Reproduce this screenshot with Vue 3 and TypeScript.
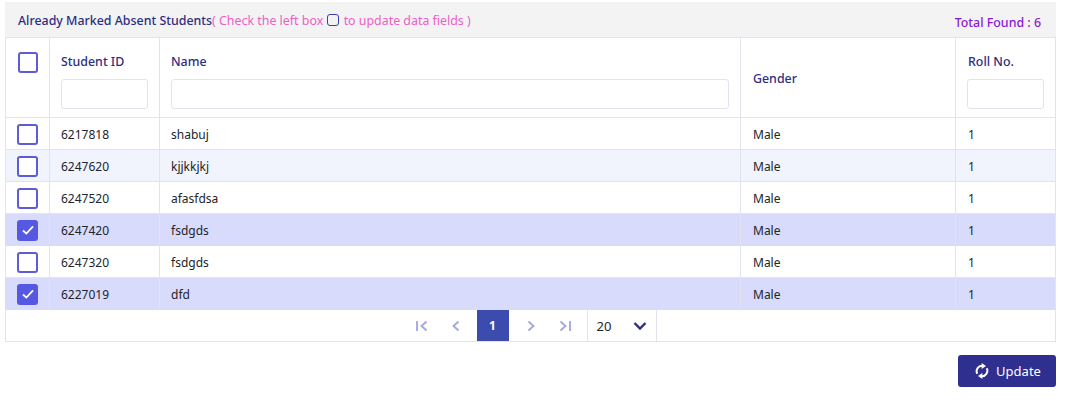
<template>
  <div class="page">
    <div class="caption">
      <div class="caption-title">
        Already Marked Absent Students<span class="hint">( Check the left box <i class="hint-box"></i> to update data fields )</span>
      </div>
      <div class="total">Total Found : {{ students.length }}</div>
    </div>

    <table class="grid">
      <colgroup>
        <col style="width: 44px" />
        <col style="width: 110px" />
        <col />
        <col style="width: 215px" />
        <col style="width: 100px" />
      </colgroup>
      <thead>
        <tr>
          <th class="check-cell head-check"><span class="box"></span></th>
          <th>
            <div class="th-label">Student ID</div>
            <input class="filter" type="text" />
          </th>
          <th>
            <div class="th-label">Name</div>
            <input class="filter" type="text" />
          </th>
          <th class="middle">Gender</th>
          <th>
            <div class="th-label roll">Roll No.</div>
            <input class="filter" type="text" />
          </th>
        </tr>
      </thead>
      <tbody>
        <tr v-for="(s, i) in students" :key="s.id" :class="{ odd: i % 2 === 1, selected: s.checked }">
          <td class="check-cell">
            <span class="box" :class="{ checked: s.checked }">
              <svg v-if="s.checked" width="14" height="14" viewBox="0 0 14 14">
                <path d="M2 7.500 5.400 10.600 12 3.400" fill="none" stroke="#fff" stroke-width="1.8" />
              </svg>
            </span>
          </td>
          <td>{{ s.id }}</td>
          <td>{{ s.name }}</td>
          <td>{{ s.gender }}</td>
          <td>{{ s.roll }}</td>
        </tr>
      </tbody>
    </table>

    <div class="pager">
      <button class="pg">
        <svg width="14" height="14" viewBox="0 0 14 14"><path d="M2 2v10M11.500 2.500 6.500 7l5 4.500" /></svg>
      </button>
      <button class="pg">
        <svg width="14" height="14" viewBox="0 0 14 14"><path d="M9.500 2.500 4.500 7l5 4.500" /></svg>
      </button>
      <button class="pg current">1</button>
      <button class="pg">
        <svg width="14" height="14" viewBox="0 0 14 14"><path d="M4.500 2.500 9.500 7l-5 4.500" /></svg>
      </button>
      <button class="pg">
        <svg width="14" height="14" viewBox="0 0 14 14"><path d="M12 2v10M2.500 2.500 7.500 7l-5 4.500" /></svg>
      </button>
      <div class="page-size">
        <span>20</span>
        <svg width="14" height="10" viewBox="0 0 14 10"><path d="M1.500 2 7 7.500 12.500 2" /></svg>
      </div>
    </div>

    <div class="actions">
      <button class="update">
        <svg class="sync" width="14" height="16" viewBox="0 0 14 16">
          <path d="M2.300 10.800A5.400 5.400 0 0 1 7.800 2.900" />
          <path d="M11.700 5.200A5.400 5.400 0 0 1 6.200 13.100" />
          <path class="head" d="M6.600 0 11 3.100 6.600 6z" />
          <path class="head" d="M7.400 10 3 12.900 7.400 16z" />
        </svg>
        Update
      </button>
    </div>
  </div>
</template>

<script setup lang="ts">
interface Student {
  id: string
  name: string
  gender: string
  roll: number
  checked: boolean
}

const students: Student[] = [
  { id: '6217818', name: 'shabuj', gender: 'Male', roll: 1, checked: false },
  { id: '6247620', name: 'kjjkkjkj', gender: 'Male', roll: 1, checked: false },
  { id: '6247520', name: 'afasfdsa', gender: 'Male', roll: 1, checked: false },
  { id: '6247420', name: 'fsdgds', gender: 'Male', roll: 1, checked: true },
  { id: '6247320', name: 'fsdgds', gender: 'Male', roll: 1, checked: false },
  { id: '6227019', name: 'dfd', gender: 'Male', roll: 1, checked: true },
]
</script>

<style>
html,
body {
  background: #fff;
}
</style>

<style scoped>
.page {
  width: 1051px;
  margin-left: 5px;
  padding-top: 2px;
  font-family: "Noto Sans", "Open Sans", sans-serif;
  font-size: 12px;
  color: #212529;
}

.caption {
  height: 35px;
  box-sizing: border-box;
  background: #f3f3f4;
  padding: 0 15px 0 13px;
  display: flex;
  justify-content: space-between;
  font-size: 12.4px;
}

.caption-title {
  padding-top: 10px;
  line-height: 17px;
  color: #2e2e7f;
  font-weight: 500;
}

.hint {
  color: #ec5fc4;
  font-weight: 400;
}

.hint-box {
  display: inline-block;
  width: 10px;
  height: 10px;
  margin: 0 1px;
  border: 1px solid #3f3fa8;
  border-radius: 3px;
  vertical-align: -1px;
}

.total {
  padding-top: 12px;
  line-height: 17px;
  color: #8a19d6;
  font-weight: 500;
}

.grid {
  width: 100%;
  table-layout: fixed;
  border-collapse: collapse;
  border: 1px solid #e2e3f0;
  border-top: 0;
}

th {
  height: 80px;
  box-sizing: border-box;
  padding: 15px 11px 7px;
  border: 1px solid #e2e3f0;
  text-align: left;
  vertical-align: top;
  font-size: 12.4px;
  font-weight: 500;
  color: #2e2e7f;
  background: #fff;
}

th.middle {
  vertical-align: middle;
  padding: 1px 11px 0 12px;
}

.th-label {
  height: 26px;
  line-height: 17px;
}

.th-label.roll {
  margin-left: 1px;
}

.filter {
  display: block;
  width: 100%;
  height: 30px;
  box-sizing: border-box;
  border: 1px solid #e2e3f0;
  border-radius: 3px;
  background: #fff;
  outline: none;
}

td {
  height: 32px;
  box-sizing: border-box;
  padding: 1px 11px 0;
  border-left: 1px solid #e2e3f0;
  border-right: 1px solid #e2e3f0;
  border-bottom: 1px solid #e2e3f0;
  vertical-align: middle;
  color: #212529;
}

td:nth-child(n + 4) {
  padding-left: 12px;
}

tr.odd td {
  background: #f1f3fd;
}

tr.selected td {
  background: #d9dbfd;
  border-color: #d9dbfd;
  border-right-color: #e2e3f0;
}

td.check-cell {
  padding: 1px 0 0 11px;
}

th.head-check {
  padding: 14px 0 0 12px;
}

th.head-check .box {
  width: 20px;
}

.box {
  display: block;
  width: 21px;
  height: 21px;
  box-sizing: border-box;
  border: 2px solid #5c5cd6;
  border-radius: 3px;
  background: #fff;
}

.box.checked {
  background: #5558e3;
  border-color: #5558e3;
  display: flex;
  align-items: center;
  justify-content: center;
}

.pager {
  height: 32px;
  box-sizing: border-box;
  border: 1px solid #e2e3f0;
  border-top: 0;
  display: flex;
  justify-content: center;
}

.pg {
  width: 34px;
  height: 31px;
  padding: 0;
  border: 0;
  background: none;
  display: flex;
  align-items: center;
  justify-content: center;
  font: inherit;
  font-weight: 700;
}

.pg path {
  fill: none;
  stroke: #a1a5e0;
  stroke-width: 1.8;
}

.pg.current {
  width: 32px;
  margin: 0 5px 0 4px;
  background: #3b4cae;
  color: #fff;
}

.page-size {
  width: 70px;
  box-sizing: border-box;
  margin-left: 5px;
  padding: 0 9px;
  border-left: 1px solid #e2e3f0;
  border-right: 1px solid #e2e3f0;
  display: flex;
  align-items: center;
  justify-content: space-between;
  font-size: 13px;
  color: #212529;
}

.page-size path {
  fill: none;
  stroke: #2e2e7f;
  stroke-width: 2.4;
}

.actions {
  display: flex;
  justify-content: flex-end;
  margin-top: 13px;
}

.update {
  width: 98px;
  height: 32px;
  padding: 0 0 0 2px;
  border: 0;
  border-radius: 3px;
  background: #2f2f8f;
  color: #fff;
  font-family: inherit;
  font-size: 13px;
  display: flex;
  align-items: center;
  justify-content: center;
  gap: 7px;
}

.sync path {
  fill: none;
  stroke: #fff;
  stroke-width: 2;
}

.sync path.head {
  fill: #fff;
  stroke: none;
}
</style>
